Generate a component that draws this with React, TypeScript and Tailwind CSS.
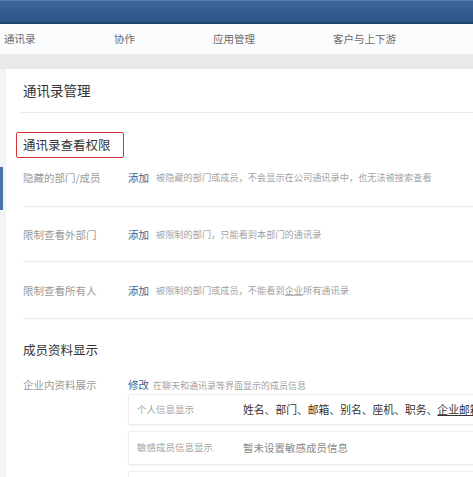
import React from "react";

const navItems = [
  { label: "通讯录", w: "w-[110px]" },
  { label: "协作", w: "w-[99px]" },
  { label: "应用管理", w: "w-[120px]" },
  { label: "客户与上下游", w: "w-[134px]" },
];

const rows = [
  {
    label: "隐藏的部门/成员",
    desc: <>被隐藏的部门或成员，不会显示在公司通讯录中，也无法被搜索查看</>,
    cls: "pt-[13px] h-[49px]",
  },
  {
    label: "限制查看外部门",
    desc: <>被限制的部门，只能看到本部门的通讯录</>,
    cls: "pt-[21px] h-[55px]",
  },
  {
    label: "限制查看所有人",
    desc: (
      <>
        被限制的部门或成员，不能看到<span className="underline decoration-[#bbb]">企业</span>所有通讯录
      </>
    ),
    cls: "pt-[22px] h-[57px]",
  },
];

export default function App() {
  return (
    <div className="w-[473px] h-[477px] overflow-hidden bg-white font-['Noto_Sans_CJK_SC',sans-serif]">
      <div className="w-[560px]">
        {/* top bar */}
        <div className="h-[24px] bg-gradient-to-b from-[#3e669a] to-[#2c5386] border-t border-[#5b7cab] border-b-2 border-b-[#21436f]" />

        {/* nav */}
        <div className="h-[30px] bg-[#fbfcfe] flex items-center pl-[4px] text-[10.5px] text-[#6b6b6b]">
          {navItems.map((n) => (
            <div key={n.label} className={`${n.w} shrink-0 leading-none`}>
              {n.label}
            </div>
          ))}
        </div>

        <div className="h-[15px] bg-[#e8e9eb]" />

        <div className="flex">
          {/* left strip */}
          <div className="w-[6px] shrink-0 bg-[#f3f4f6] h-[408px]">
            <div className="mt-[98px] w-[3px] h-[43px] bg-[#4b72a8]" />
          </div>

          {/* panel */}
          <div className="flex-1 bg-white">
            <div className="ml-[14px] h-[44px] border-b border-[#ececec] flex items-center pl-[3px] text-[13.5px] text-[#333]">
              通讯录管理
            </div>

            <div className="mt-[19px] ml-[10px] w-[108px] h-[26px] border-[1.5px] border-[#d8323a] rounded-[2px] flex items-center pl-[6px] text-[12.5px] text-[#333] leading-none">
              通讯录查看权限
            </div>

            {rows.map((r) => (
              <div key={r.label} className={`ml-[17px] border-b border-[#ececec] ${r.cls}`}>
                <div className="flex items-center h-[14px] leading-none">
                  <div className="w-[105px] text-[10.5px] text-[#9a9a9a]">{r.label}</div>
                  <div className="w-[28px] text-[10.5px] text-[#3d5d91]">添加</div>
                  <div className="text-[9.2px] text-[#a3a3a3] whitespace-nowrap">{r.desc}</div>
                </div>
              </div>
            ))}

            <div className="ml-[17px] mt-[24px] text-[12.5px] text-[#333] leading-[14px]">成员资料显示</div>

            <div className="ml-[17px] mt-[21px] flex leading-none">
              <div className="w-[105px] text-[10.5px] text-[#9a9a9a] h-[14px] flex items-center">企业内资料展示</div>
              <div className="flex-1">
                <div className="h-[14px] flex items-center whitespace-nowrap">
                  <span className="text-[10.5px] text-[#3d5d91] mr-[4px]">修改</span>
                  <span className="text-[9px] text-[#a3a3a3]">在聊天和通讯录等界面显示的成员信息</span>
                </div>
                <div className="mt-[2px] h-[31px] border border-[#ededed] rounded-[2px] shadow-[0_1px_2px_rgba(0,0,0,0.04)] flex items-center pl-[8px] whitespace-nowrap">
                  <div className="w-[106px] text-[9.5px] text-[#a3a3a3]">个人信息显示</div>
                  <div className="text-[10.8px] text-[#333]">
                    姓名、部门、邮箱、别名、座机、职务、<span className="underline">企业邮箱</span>
                  </div>
                </div>
                <div className="mt-[6px] h-[34px] border border-[#ededed] rounded-[2px] shadow-[0_1px_2px_rgba(0,0,0,0.04)] flex items-center pl-[8px] whitespace-nowrap">
                  <div className="w-[106px] text-[9.5px] text-[#a3a3a3]">敏感成员信息显示</div>
                  <div className="text-[10.5px] text-[#8a8a8a]">暂未设置敏感成员信息</div>
                </div>
                <div className="mt-[6px] h-[34px] border border-[#ededed] rounded-[2px]" />
              </div>
            </div>
          </div>
        </div>
      </div>
    </div>
  );
}
